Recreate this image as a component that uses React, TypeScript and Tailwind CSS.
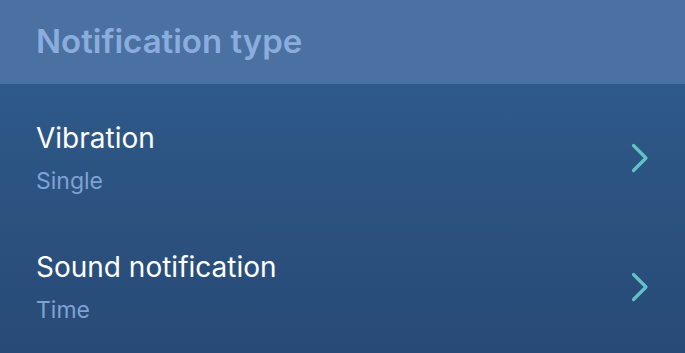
import { ReactNode } from "react";

function Chevron() {
  return (
    <svg width="18" height="30" viewBox="0 0 18 30" fill="none" className="shrink-0">
      <path
        d="M2.5 2.5 L15 15 L2.5 27.5"
        stroke="#62c2c6"
        strokeWidth="3.2"
        strokeLinecap="round"
        strokeLinejoin="round"
      />
    </svg>
  );
}

function SettingRow({ title, value }: { title: string; value: ReactNode }) {
  return (
    <div className="h-[129px] pl-[36px] pr-[36px] pt-[37px] flex items-start justify-between">
      <div className="flex flex-col">
        <span className="text-[28px] leading-[34px] text-white">{title}</span>
        <span className="mt-[12px] text-[23px] leading-[28px] text-[#7ea2d4]">{value}</span>
      </div>
      <div className="mt-[22px]">
        <Chevron />
      </div>
    </div>
  );
}

export default function App() {
  return (
    <div
      className="w-[685px] h-[353px] overflow-hidden flex flex-col"
      style={{ fontFamily: "Inter, 'Noto Sans', sans-serif" }}
    >
      <div className="h-[84px] shrink-0 bg-[#4a71a2] pl-[36px] flex items-center">
        <h2 className="text-[33px] font-semibold text-[#8badde]">Notification type</h2>
      </div>
      <div className="flex-1 bg-gradient-to-b from-[#2e5989] to-[#284a76]">
        <SettingRow title="Vibration" value="Single" />
        <SettingRow title="Sound notification" value="Time" />
      </div>
    </div>
  );
}
